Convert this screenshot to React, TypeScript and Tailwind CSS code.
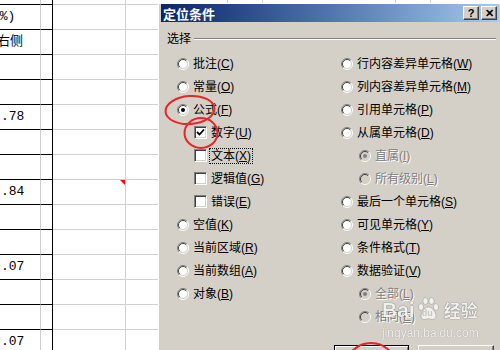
import React from 'react';

type Opt = {
  t: string;
  k: string;
  kind: 'radio' | 'check';
  checked?: boolean;
  disabled?: boolean;
  indent?: boolean;
  focus?: boolean;
};

const leftOpts: Opt[] = [
  { t: '批注', k: 'C', kind: 'radio' },
  { t: '常量', k: 'O', kind: 'radio' },
  { t: '公式', k: 'F', kind: 'radio', checked: true },
  { t: '数字', k: 'U', kind: 'check', checked: true, indent: true },
  { t: '文本', k: 'X', kind: 'check', indent: true, focus: true },
  { t: '逻辑值', k: 'G', kind: 'check', indent: true },
  { t: '错误', k: 'E', kind: 'check', indent: true },
  { t: '空值', k: 'K', kind: 'radio' },
  { t: '当前区域', k: 'R', kind: 'radio' },
  { t: '当前数组', k: 'A', kind: 'radio' },
  { t: '对象', k: 'B', kind: 'radio' },
];

const rightOpts: Opt[] = [
  { t: '行内容差异单元格', k: 'W', kind: 'radio' },
  { t: '列内容差异单元格', k: 'M', kind: 'radio' },
  { t: '引用单元格', k: 'P', kind: 'radio' },
  { t: '从属单元格', k: 'D', kind: 'radio' },
  { t: '直属', k: 'I', kind: 'radio', checked: true, disabled: true, indent: true },
  { t: '所有级别', k: 'L', kind: 'radio', disabled: true, indent: true },
  { t: '最后一个单元格', k: 'S', kind: 'radio' },
  { t: '可见单元格', k: 'Y', kind: 'radio' },
  { t: '条件格式', k: 'T', kind: 'radio' },
  { t: '数据验证', k: 'V', kind: 'radio' },
  { t: '全部', k: 'L', kind: 'radio', checked: true, disabled: true, indent: true },
  { t: '相同', k: 'E', kind: 'radio', disabled: true, indent: true },
];

// text shown in the sheet's first column, by row
const cellText: Record<number, string> = {
  1: '(%)',
  2: '右侧',
  5: '.78',
  8: '.84',
  11: '.07',
  14: '.07',
};

function Radio({ checked, disabled }: { checked?: boolean; disabled?: boolean }) {
  return (
    <svg width="12" height="12" viewBox="0 0 12 12" className="shrink-0">
      <circle cx="6" cy="6" r="5" fill={disabled ? '#d4d0c8' : '#fff'} />
      <path d="M2.1 9.9 A5.5 5.5 0 0 1 9.9 2.1" stroke="#808080" fill="none" />
      <path d="M2.8 9.2 A4.5 4.5 0 0 1 9.2 2.8" stroke="#404040" fill="none" />
      <path d="M9.9 2.1 A5.5 5.5 0 0 1 2.1 9.9" stroke="#fff" fill="none" />
      <path d="M9.2 2.8 A4.5 4.5 0 0 1 2.8 9.2" stroke="#d4d0c8" fill="none" />
      {checked && <circle cx="6" cy="6" r="2" fill={disabled ? '#808080' : '#000'} />}
    </svg>
  );
}

function Check({ checked }: { checked?: boolean }) {
  return (
    <div className="w-[13px] h-[13px] shrink-0 bg-white border border-t-[#808080] border-l-[#808080] border-b-white border-r-white shadow-[inset_1px_1px_0_#404040,inset_-1px_-1px_0_#d4d0c8] flex items-center justify-center">
      {checked && (
        <svg width="9" height="9" viewBox="0 0 9 9">
          <path d="M1 4 L3.5 6.5 L8 1.5" stroke="#000" strokeWidth="1.8" fill="none" />
        </svg>
      )}
    </div>
  );
}

function Option({ o, indent }: { o: Opt; indent: string }) {
  const text = (
    <span>
      {o.t}(<span className="underline">{o.k}</span>)
    </span>
  );
  return (
    <div className={`flex items-center h-[23px] gap-[4px] ${o.indent ? indent : ''}`}>
      {o.kind === 'radio' ? <Radio checked={o.checked} disabled={o.disabled} /> : <Check checked={o.checked} />}
      <span
        className={`leading-[14px] whitespace-nowrap ${o.disabled ? 'text-[#808080] [text-shadow:1px_1px_0_#fff]' : 'text-black'} ${
          o.focus ? 'border border-dotted border-black px-[1px] -ml-[2px]' : ''
        }`}
      >
        {text}
      </span>
    </div>
  );
}

function Sheet() {
  const rows = Array.from({ length: 15 }, (_, i) => i);
  return (
    <div className="flex flex-col font-['Liberation_Mono','Noto_Sans_CJK_SC',monospace] text-[13px] text-black">
      {rows.map((r) => (
        <div key={r} className={`flex ${r === 0 ? 'h-[5px]' : 'h-[25px]'}`}>
          <div className="w-[41px] border-b border-b-black border-r border-r-[#d0d0d0] flex items-center overflow-hidden whitespace-nowrap">
            {cellText[r] && (
              <span className={r === 1 ? '-ml-[8px]' : r === 2 ? '-ml-[3px]' : 'ml-[1px]'}>{cellText[r]}</span>
            )}
          </div>
          <div className="w-[12px] border-b border-b-black border-r border-r-black" />
          <div className="w-[73px] border-b border-r border-[#d0d0d0] relative">
            {r === 8 && (
              <div className="absolute right-0 top-0 w-0 h-0 border-t-[5px] border-t-[#ff0000] border-l-[5px] border-l-transparent" />
            )}
          </div>
          <div className="w-[102px] border-b border-r border-[#d0d0d0]" />
          <div className="w-[35px] border-b border-r border-[#d0d0d0]" />
          <div className="w-[133px] border-b border-r border-[#d0d0d0]" />
          <div className="w-[35px] border-b border-r border-[#d0d0d0]" />
          <div className="flex-1 border-b border-[#d0d0d0]" />
        </div>
      ))}
    </div>
  );
}

function TitleButton({ children }: { children: React.ReactNode }) {
  return (
    <div className="w-[16px] h-[14px] bg-[#d4d0c8] border border-t-white border-l-white border-b-[#404040] border-r-[#404040] shadow-[inset_-1px_-1px_0_#808080] flex items-center justify-center text-[11px] font-bold leading-none text-black font-['Liberation_Sans',sans-serif]">
      {children}
    </div>
  );
}

function Dialog() {
  return (
    <div className="absolute left-[158px] top-[3px] w-[345px] h-[380px] bg-[#d4d0c8] p-[1px] pl-[3px] shadow-[inset_1px_1px_0_#fff] font-['Liberation_Sans','Noto_Sans_CJK_SC',sans-serif] text-[12px]">
      <div className="h-[18px] w-[338px] bg-gradient-to-r from-[#0a246a] to-[#a6caf0] flex items-center pl-[2px] pr-[2px]">
        <span className="text-white font-bold text-[13px] leading-none font-['Noto_Sans_CJK_SC',sans-serif]">定位条件</span>
        <div className="ml-auto flex gap-[2px]">
          <TitleButton>?</TitleButton>
          <TitleButton>✕</TitleButton>
        </div>
      </div>
      <div className="flex items-center mt-[10px] h-[14px] pl-[6px] pr-[6px] gap-[3px]">
        <span className="text-black leading-none">选择</span>
        <div className="flex-1 border-t border-t-[#808080] border-b border-b-white" />
      </div>
      <div className="mt-[6px] pl-[16px] grid grid-cols-[164px_1fr]">
        <div className="flex flex-col">
          {leftOpts.map((o) => (
            <Option key={o.t} o={o} indent="ml-[17px]" />
          ))}
        </div>
        <div className="flex flex-col">
          {rightOpts.map((o) => (
            <Option key={o.t + o.k} o={o} indent="ml-[18px]" />
          ))}
        </div>
      </div>
      <div className="flex pl-[173px] gap-[9px] mt-[17px]">
        <button className="w-[75px] h-[23px] bg-[#d4d0c8] border border-black shadow-[inset_1px_1px_0_#fff,inset_-1px_-1px_0_#808080] text-black">
          确定
        </button>
        <button className="w-[76px] h-[23px] bg-[#d4d0c8] border border-t-white border-l-white border-b-[#404040] border-r-[#404040] shadow-[inset_-1px_-1px_0_#808080] text-black">
          取消
        </button>
      </div>
    </div>
  );
}

function Watermark() {
  return (
    <div className="absolute left-[382px] top-[295px] flex flex-col items-start opacity-85 pointer-events-none">
      <div className="flex items-center h-[28px] text-[#f6f6f6] [text-shadow:0_0_1px_rgba(0,0,0,0.5),0_0_1px_rgba(0,0,0,0.5)]">
        <span className="font-['Liberation_Sans',sans-serif] font-bold text-[21px] leading-none">Bai</span>
        <div className="relative w-[25px] h-[26px] ml-[1px]">
          <svg width="25" height="26" viewBox="0 0 25 26" className="absolute inset-0">
            <g fill="#f6f6f6" stroke="rgba(0,0,0,0.3)" strokeWidth="0.7">
              <ellipse cx="5" cy="11" rx="2.6" ry="3.4" />
              <ellipse cx="9.5" cy="5" rx="2.6" ry="3.4" />
              <ellipse cx="15.5" cy="5" rx="2.6" ry="3.4" />
              <ellipse cx="20" cy="11" rx="2.6" ry="3.4" />
              <path d="M12.5 11 C8 11 5 17 5 20 C5 24 9 24 12.5 22.5 C16 24 20 24 20 20 C20 17 17 11 12.5 11 Z" />
            </g>
          </svg>
          <span className="absolute left-[6px] top-[13px] text-[9px] font-bold leading-none text-[#c8c4bc] font-['Liberation_Sans',sans-serif] [text-shadow:none]">
            du
          </span>
        </div>
        <span className="ml-[3px] text-[17px] font-bold leading-none font-['Noto_Sans_CJK_SC',sans-serif]">经验</span>
      </div>
      <span className="mt-[4px] text-[12px] leading-none text-[#f6f6f6] font-['Liberation_Sans',sans-serif] [text-shadow:0_0_1px_rgba(0,0,0,0.45)]">
        jingyan.baidu.com
      </span>
    </div>
  );
}

export default function App() {
  return (
    <div className="relative w-[500px] h-[350px] overflow-hidden bg-white">
      <Sheet />
      <Dialog />
      <Watermark />
      <svg className="absolute inset-0 pointer-events-none" width="500" height="350" viewBox="0 0 500 350">
        <g fill="none" stroke="#e8262a" strokeWidth="2">
          <ellipse cx="190" cy="110" rx="24.5" ry="14" transform="rotate(-4 190 110)" />
          <ellipse cx="201" cy="133" rx="16.5" ry="15" />
          <ellipse cx="371" cy="367" rx="25" ry="24" />
        </g>
      </svg>
    </div>
  );
}
